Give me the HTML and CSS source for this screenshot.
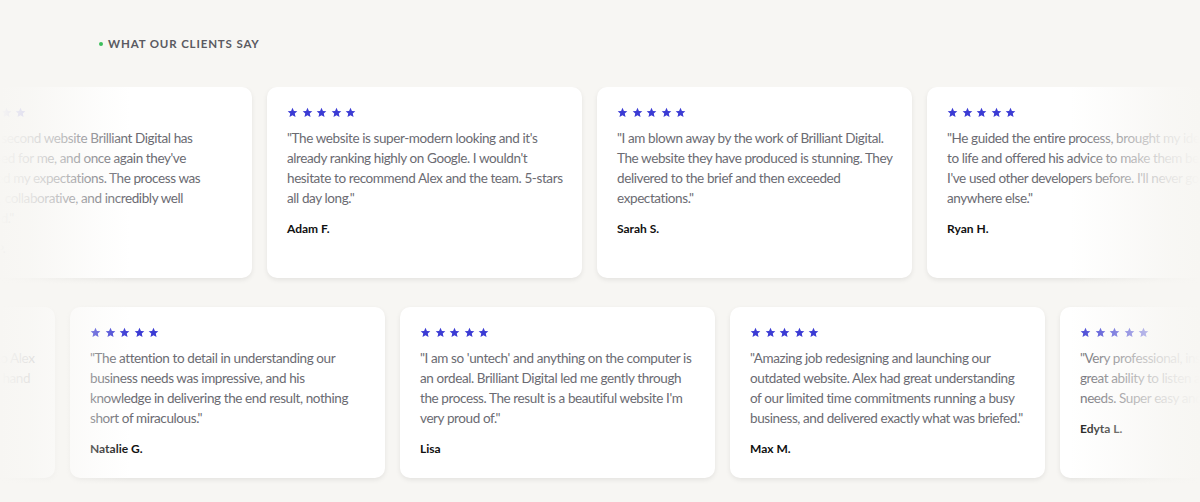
FILE: index.html
```html
<!DOCTYPE html>
<html lang="en">
  <head>
    <meta charset="UTF-8" />
    <meta name="viewport" content="width=device-width, initial-scale=1.0" />
    <title>Testimonials</title>
    <link rel="stylesheet" href="styles.css">
  </head>
  <body>
    <svg width="0" height="0" class="defs">
      <defs>
        <symbol id="star" viewBox="0 0 24 24">
          <path d="M12 1.8l3.1 6.9 7.4.7-5.6 5 1.7 7.4L12 17.9l-6.6 3.9 1.7-7.4-5.6-5 7.4-.7z" />
        </symbol>
      </defs>
    </svg>

    <section class="testimonials">
      <p class="eyebrow"><span class="dot"></span>What our clients say</p>

      <div class="marquee">
        <div class="track track-top">
          <div class="card">
            <div class="stars"><svg><use href="#star"/></svg><svg><use href="#star"/></svg><svg><use href="#star"/></svg><svg><use href="#star"/></svg><svg><use href="#star"/></svg></div>
            <p class="quote">"It's the second website Brilliant Digital has developed for me, and once again they've exceeded my expectations. The process was smooth, collaborative, and incredibly well managed."</p>
            <p class="author">Sophie P.</p>
          </div>
          <div class="card">
            <div class="stars"><svg><use href="#star"/></svg><svg><use href="#star"/></svg><svg><use href="#star"/></svg><svg><use href="#star"/></svg><svg><use href="#star"/></svg></div>
            <p class="quote">"The website is super-modern looking and it's already ranking highly on Google. I wouldn't hesitate to recommend Alex and the team. <span class="nowrap">5-stars</span> all day long."</p>
            <p class="author">Adam F.</p>
          </div>
          <div class="card">
            <div class="stars"><svg><use href="#star"/></svg><svg><use href="#star"/></svg><svg><use href="#star"/></svg><svg><use href="#star"/></svg><svg><use href="#star"/></svg></div>
            <p class="quote">"I am blown away by the work of Brilliant Digital. The website they have produced is stunning. They delivered to the brief and then exceeded expectations."</p>
            <p class="author">Sarah S.</p>
          </div>
          <div class="card">
            <div class="stars"><svg><use href="#star"/></svg><svg><use href="#star"/></svg><svg><use href="#star"/></svg><svg><use href="#star"/></svg><svg><use href="#star"/></svg></div>
            <p class="quote">"He guided the entire process, brought my ideas to life and offered his advice to make them better. I've used other developers before. I'll never go anywhere else."</p>
            <p class="author">Ryan H.</p>
          </div>
        </div>

        <div class="track track-bottom">
          <div class="card">
            <div class="stars"><svg><use href="#star"/></svg><svg><use href="#star"/></svg><svg><use href="#star"/></svg><svg><use href="#star"/></svg><svg><use href="#star"/></svg></div>
            <p class="quote">"Fantastic work from start to finish, thanks to Alex and the crew. Quick, friendly and always on hand to help."</p>
            <p class="author">Tom W.</p>
          </div>
          <div class="card">
            <div class="stars"><svg><use href="#star"/></svg><svg><use href="#star"/></svg><svg><use href="#star"/></svg><svg><use href="#star"/></svg><svg><use href="#star"/></svg></div>
            <p class="quote">"The attention to detail in understanding our business needs was impressive, and his knowledge in delivering the end result, nothing short of miraculous."</p>
            <p class="author">Natalie G.</p>
          </div>
          <div class="card">
            <div class="stars"><svg><use href="#star"/></svg><svg><use href="#star"/></svg><svg><use href="#star"/></svg><svg><use href="#star"/></svg><svg><use href="#star"/></svg></div>
            <p class="quote">"I am so 'untech' and anything on the computer is an ordeal. Brilliant Digital led me gently through the process. The result is a beautiful website I'm very proud of."</p>
            <p class="author">Lisa</p>
          </div>
          <div class="card">
            <div class="stars"><svg><use href="#star"/></svg><svg><use href="#star"/></svg><svg><use href="#star"/></svg><svg><use href="#star"/></svg><svg><use href="#star"/></svg></div>
            <p class="quote">"Amazing job redesigning and launching our outdated website. Alex had great understanding of our limited time commitments running a busy business, and delivered exactly what was briefed."</p>
            <p class="author">Max M.</p>
          </div>
          <div class="card">
            <div class="stars"><svg><use href="#star"/></svg><svg><use href="#star"/></svg><svg><use href="#star"/></svg><svg><use href="#star"/></svg><svg><use href="#star"/></svg></div>
            <p class="quote">"Very professional, insightful and quick, with a great ability to listen and respond to all of our needs. Super easy and fun."</p>
            <p class="author">Edyta L.</p>
          </div>
        </div>

        <div class="fade fade-left"></div>
        <div class="fade fade-right"></div>
      </div>
    </section>
  </body>
</html>
```

FILE: styles.css
```css
body {
  margin: 0;
  padding: 0;
  background: #f7f6f3;
  font-family: "Lato", "Open Sans", sans-serif;
  color: #111;
  overflow: hidden;
}

.defs {
  position: absolute;
}

.testimonials {
  padding-top: 37px;
}

.eyebrow {
  display: flex;
  align-items: center;
  gap: 5px;
  margin: 0 0 36px 99px;
  font-size: 11.5px;
  font-weight: 700;
  letter-spacing: 0.85px;
  line-height: 14px;
  text-transform: uppercase;
  color: #5a5a61;
}

.dot {
  width: 4px;
  height: 4px;
  border-radius: 50%;
  background: #3cbf5c;
}

.marquee {
  position: relative;
  display: flex;
  flex-direction: column;
  gap: 29px;
  overflow: hidden;
  padding-bottom: 20px;
}

.track {
  display: flex;
  gap: 15px;
}

.track-top {
  margin-left: -63px;
}

.track-bottom {
  margin-left: -260px;
}

.card {
  flex: 0 0 315px;
  box-sizing: border-box;
  padding: 20px 18px 22px 20px;
  background: #fff;
  border-radius: 10px;
  box-shadow: 0 2px 5px rgba(0, 0, 0, 0.08);
}

.stars {
  display: flex;
  gap: 3.5px;
  height: 11px;
  color: #3b3bd4;
}

.stars svg {
  width: 11px;
  height: 11px;
  fill: currentColor;
}

.quote {
  margin: 10px 0 0;
  font-size: 13.5px;
  line-height: 20px;
  letter-spacing: -0.4px;
  color: #6b6b72;
}

.nowrap {
  white-space: nowrap;
}

.author {
  margin: 14px 0 0;
  font-size: 12px;
  line-height: 14px;
  font-weight: 700;
  color: #111;
}

.fade {
  position: absolute;
  top: 0;
  bottom: 0;
  width: 130px;
  pointer-events: none;
}

.fade-left {
  left: 0;
  background: linear-gradient(to right, #f7f6f3 0%, rgba(247, 246, 243, 0.85) 25%, rgba(247, 246, 243, 0) 100%);
}

.fade-right {
  right: 0;
  background: linear-gradient(to left, #f7f6f3 0%, rgba(247, 246, 243, 0.85) 25%, rgba(247, 246, 243, 0) 100%);
}
```
